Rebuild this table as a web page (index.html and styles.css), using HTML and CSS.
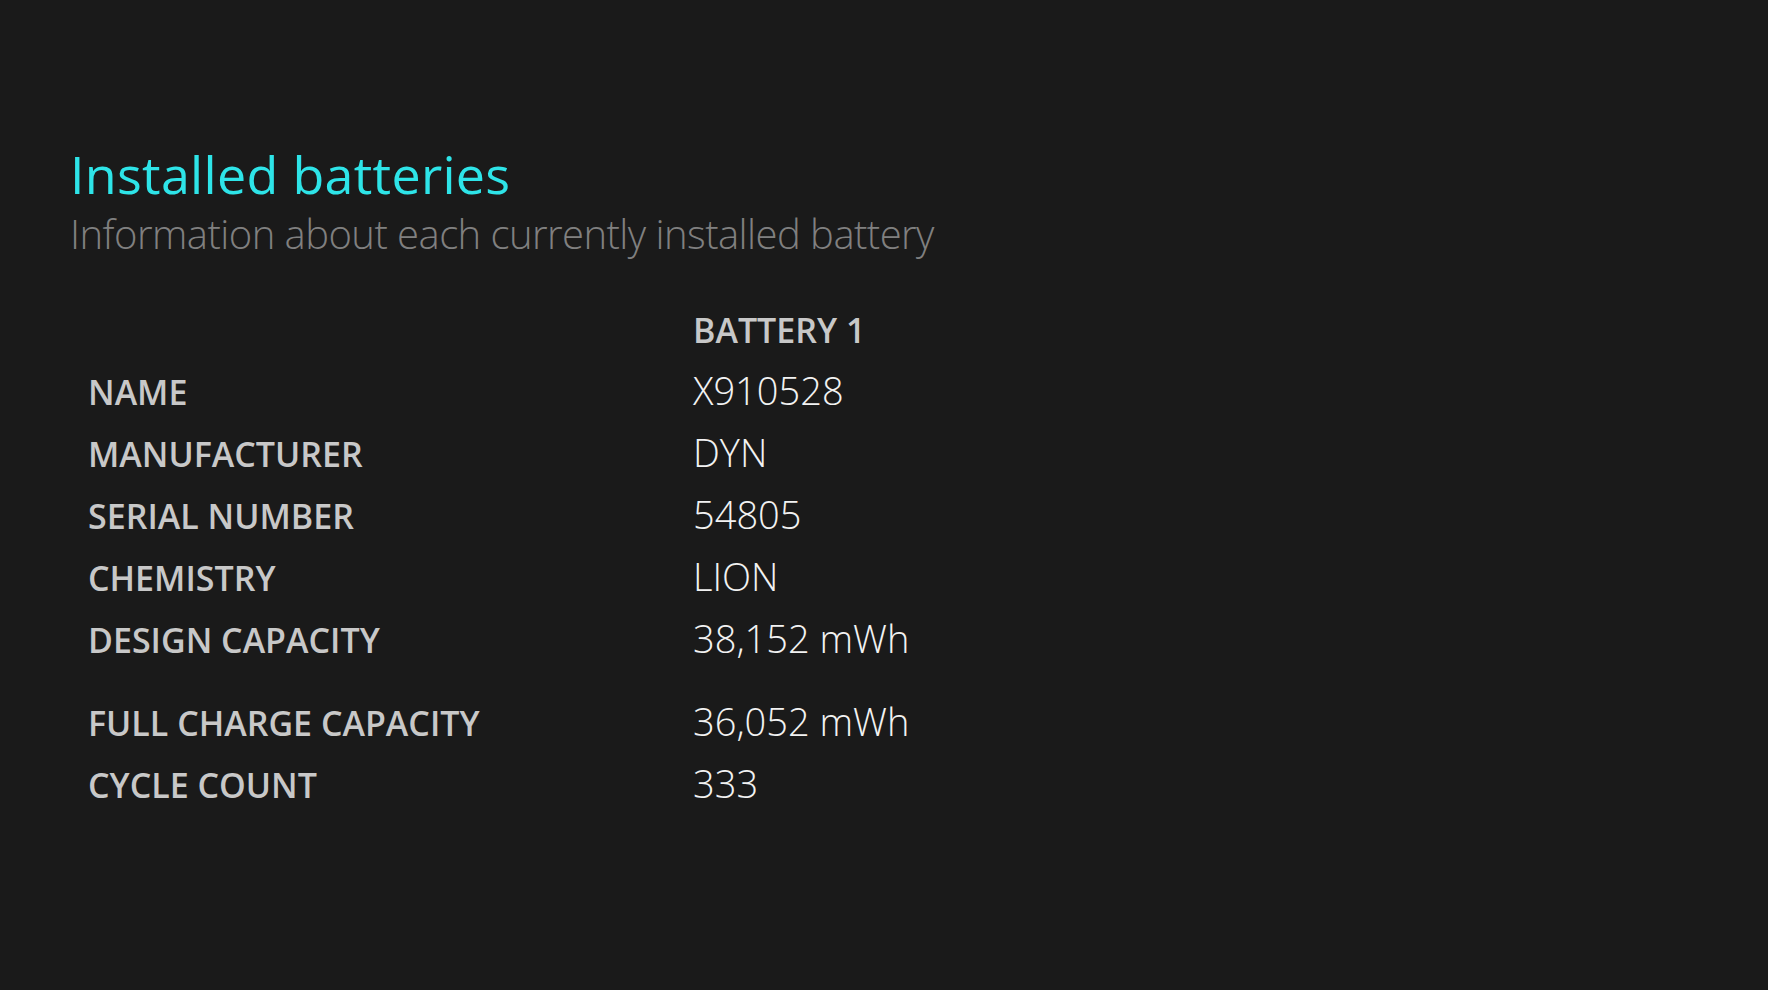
FILE: index.html
```html
<!DOCTYPE html>
<html lang="en">
<head>
<meta charset="utf-8">
<title>Installed batteries</title>
<link rel="stylesheet" href="styles.css">
</head>
<body>
<main class="page">
  <h2 class="title">Installed batteries</h2>
  <p class="subtitle">Information about each currently installed battery</p>
  <div class="table">
    <div class="row head"><span class="label"></span><span class="label">BATTERY 1</span></div>
    <div class="row"><span class="label">NAME</span><span class="value">X910528</span></div>
    <div class="row"><span class="label">MANUFACTURER</span><span class="value">DYN</span></div>
    <div class="row"><span class="label">SERIAL NUMBER</span><span class="value">54805</span></div>
    <div class="row"><span class="label">CHEMISTRY</span><span class="value">LION</span></div>
    <div class="row"><span class="label">DESIGN CAPACITY</span><span class="value">38,152 mWh</span></div>
    <div class="row spaced"><span class="label">FULL CHARGE CAPACITY</span><span class="value">36,052 mWh</span></div>
    <div class="row"><span class="label">CYCLE COUNT</span><span class="value">333</span></div>
  </div>
</main>
</body>
</html>
```
FILE: styles.css
```css
html, body {
  margin: 0;
  padding: 0;
  background: #1a1a1a;
  height: 100%;
}
body {
  font-family: "Open Sans", "Noto Sans", sans-serif;
}
.page {
  padding: 148px 0 0 70px;
}
.title {
  margin: 0;
  font-size: 52px;
  line-height: 52px;
  font-weight: 400;
  letter-spacing: 0.3px;
  color: #2ee4e8;
}
.subtitle {
  margin: 14px 0 0 0;
  font-size: 40px;
  line-height: 40px;
  font-weight: 300;
  letter-spacing: -0.55px;
  color: #808080;
}
.table {
  margin-top: 45px;
  padding-left: 18px;
}
.row {
  display: grid;
  grid-template-columns: 605px auto;
  height: 62px;
  line-height: 62px;
}
.row.spaced {
  margin-top: 21px;
}
.label {
  font-size: 34px;
  font-weight: 600;
  color: #c8c8c8;
}
.value {
  font-size: 38px;
  line-height: 58px;
  font-weight: 300;
  color: #f2f2f2;
}
```
